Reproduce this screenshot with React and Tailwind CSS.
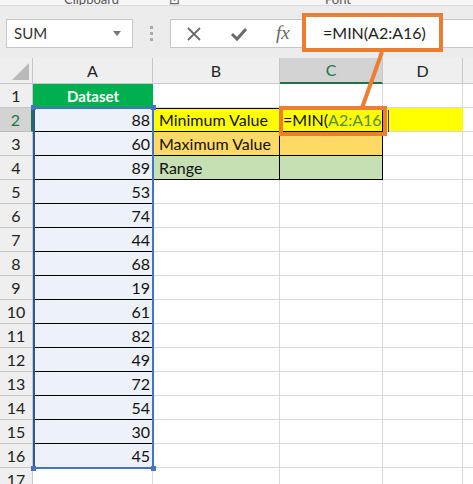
import React from "react";

const values = [88, 60, 89, 53, 74, 44, 68, 19, 61, 82, 49, 72, 54, 30, 45];

function RowHead({ n, active }) {
  return (
    <div
      className={
        active
          ? "w-[33px] shrink-0 h-full flex items-center justify-center bg-[#d3d3d3] border-r-2 border-r-[#217346] border-b border-b-[#bdbdbd] text-[#217346]"
          : "w-[33px] shrink-0 h-full flex items-center justify-center bg-[#efefef] border-r border-b border-[#c8c8c8] text-[#222]"
      }
    >
      {n}
    </div>
  );
}

function Empty({ w }) {
  return <div className={`${w} shrink-0 h-full border-r border-b border-[#d9d9d9]`} />;
}

export default function App() {
  return (
    <div
      className="relative w-[473px] h-[484px] overflow-hidden bg-white text-[16px] text-[#111]"
      style={{ fontFamily: "Lato, 'Noto Sans', sans-serif" }}
    >
      {/* ribbon group labels, cut off by the crop */}
      <div className="h-[6px] overflow-hidden bg-[#f6f6f6] border-b border-[#dadada] text-[13px] text-[#555]">
        <div className="flex -mt-[10px]">
          <span className="ml-[64px]">Clipboard</span>
          <span className="ml-[50px]">⊡</span>
          <span className="ml-[145px]">Font</span>
        </div>
      </div>

      {/* formula bar row */}
      <div className="h-[52px] bg-[#ececec] flex items-start pt-[13px]">
        <div className="ml-[6px] w-[127px] h-[29px] bg-white border border-[#c6c6c6] flex items-center px-[7px] text-[15px] text-[#333]">
          <span className="flex-1">SUM</span>
          <span className="w-0 h-0 border-l-[4px] border-r-[4px] border-t-[5px] border-l-transparent border-r-transparent border-t-[#777] mr-[4px]" />
        </div>
        <div className="w-[37px] h-[29px] flex flex-col items-center justify-center gap-[3px]">
          <span className="w-[3px] h-[3px] bg-[#aaa]" />
          <span className="w-[3px] h-[3px] bg-[#aaa]" />
          <span className="w-[3px] h-[3px] bg-[#aaa]" />
        </div>
        <div className="flex-1 h-[29px] bg-white border border-[#c6c6c6] border-r-0 flex items-center">
          <svg width="16" height="16" viewBox="0 0 16 16" className="ml-[15px]">
            <path d="M2 2 L14 14 M14 2 L2 14" stroke="#6a6a6a" strokeWidth="1.8" />
          </svg>
          <svg width="18" height="16" viewBox="0 0 18 16" className="ml-[28px]">
            <path d="M2 8 L7 13 L16 3" stroke="#6a6a6a" strokeWidth="3" fill="none" />
          </svg>
          <span
            className="ml-[28px] text-[19px] italic text-[#666]"
            style={{ fontFamily: "'Liberation Serif', serif" }}
          >
            fx
          </span>
        </div>
      </div>

      {/* sheet */}
      <div className="flex flex-col text-[16px]">
        {/* column headers */}
        <div className="flex h-[26px] text-[#222]">
          <div className="relative w-[33px] shrink-0 h-full bg-[#efefef] border-r border-b border-[#c8c8c8]">
            <div
              className="absolute right-[3px] bottom-[3px] w-0 h-0"
              style={{ borderBottom: "17px solid #b9b9b9", borderLeft: "17px solid transparent" }}
            />
          </div>
          <div className="w-[120px] shrink-0 h-full flex items-center justify-center bg-[#efefef] border-r border-b border-[#c8c8c8]">A</div>
          <div className="w-[127px] shrink-0 h-full flex items-center justify-center bg-[#efefef] border-r border-b border-[#c8c8c8]">B</div>
          <div className="w-[103px] shrink-0 h-full flex items-center justify-center bg-[#d3d3d3] border-r border-r-[#c8c8c8] border-b-2 border-b-[#217346] text-[#217346]">C</div>
          <div className="w-[80px] shrink-0 h-full flex items-center justify-center bg-[#efefef] border-r border-b border-[#c8c8c8]">D</div>
          <div className="flex-1 h-full bg-[#efefef] border-b border-[#c8c8c8]" />
        </div>

        {/* row 1 */}
        <div className="flex h-[24px]">
          <RowHead n={1} />
          <div className="w-[120px] shrink-0 h-full flex items-center justify-center bg-[#00b050] text-white font-bold text-[15px]">
            Dataset
          </div>
          <Empty w="w-[127px]" />
          <Empty w="w-[103px]" />
          <Empty w="w-[80px]" />
          <div className="flex-1 h-full border-b border-[#d9d9d9]" />
        </div>

        {values.map((v, i) => {
          const r = i + 2;
          return (
            <div key={r} className="flex h-[24px]">
              <RowHead n={r} active={r === 2} />
              <div className="w-[120px] shrink-0 h-full flex items-center justify-end pr-[3px] bg-[#edf2fa] border-b border-black">
                {v}
              </div>
              {r === 2 && (
                <>
                  <div className="w-[127px] shrink-0 h-full flex items-center pl-[5px] bg-[#ffff00] border border-black">Minimum Value</div>
                  <div className="w-[103px] shrink-0 h-full flex items-center pl-[3px] bg-[#ffff00] border-t border-r border-b border-black whitespace-nowrap">
                    <span>=MIN(</span>
                    <span className="text-[#548a4a]">A2:A16</span>
                  </div>
                  <div className="w-[80px] shrink-0 h-full bg-[#ffff00] border-b border-[#d9d9d9]" />
                </>
              )}
              {r === 3 && (
                <>
                  <div className="w-[127px] shrink-0 h-full flex items-center pl-[5px] bg-[#ffd966] border-l border-r border-b border-black">Maximum Value</div>
                  <div className="w-[103px] shrink-0 h-full bg-[#ffd966] border-r border-b border-black" />
                  <Empty w="w-[80px]" />
                </>
              )}
              {r === 4 && (
                <>
                  <div className="w-[127px] shrink-0 h-full flex items-center pl-[5px] bg-[#c6e0b4] border-l border-r border-b border-black">Range</div>
                  <div className="w-[103px] shrink-0 h-full bg-[#c6e0b4] border-r border-b border-black" />
                  <Empty w="w-[80px]" />
                </>
              )}
              {r > 4 && (
                <>
                  <Empty w="w-[127px]" />
                  <Empty w="w-[103px]" />
                  <Empty w="w-[80px]" />
                </>
              )}
              <div className="flex-1 h-full border-b border-[#d9d9d9]" />
            </div>
          );
        })}

        {/* row 17 */}
        <div className="flex h-[24px]">
          <RowHead n={17} />
          <Empty w="w-[120px]" />
          <Empty w="w-[127px]" />
          <Empty w="w-[103px]" />
          <Empty w="w-[80px]" />
        </div>
      </div>

      {/* range reference outline A2:A16 */}
      <div className="absolute left-[33px] top-[107px] w-[121px] h-[362px] border-2 border-[#4472c4] border-l-[#2f5597]" />
      <div className="absolute left-[31px] top-[105px] w-[5px] h-[5px] bg-[#4472c4]" />
      <div className="absolute left-[151px] top-[105px] w-[5px] h-[5px] bg-[#4472c4]" />
      <div className="absolute left-[31px] top-[466px] w-[5px] h-[5px] bg-[#4472c4]" />
      <div className="absolute left-[151px] top-[466px] w-[5px] h-[5px] bg-[#4472c4]" />

      {/* callout */}
      <svg className="absolute left-0 top-0" width="473" height="484">
        <line x1="382" y1="52" x2="362" y2="108" stroke="#ed7d31" strokeWidth="4" />
      </svg>
      <div className="absolute left-[302px] top-[13px] w-[141px] h-[39px] bg-white border-4 border-[#ed7d31] flex items-center pl-[17px] text-[16px] text-[#222]">
        =MIN(A2:A16)
      </div>
      <div className="absolute left-[279px] top-[106px] w-[108px] h-[30px] border-4 border-[#ed7d31]" />
      <div className="absolute left-[388px] top-[110px] w-[1px] h-[22px] bg-[#333]" />
    </div>
  );
}
